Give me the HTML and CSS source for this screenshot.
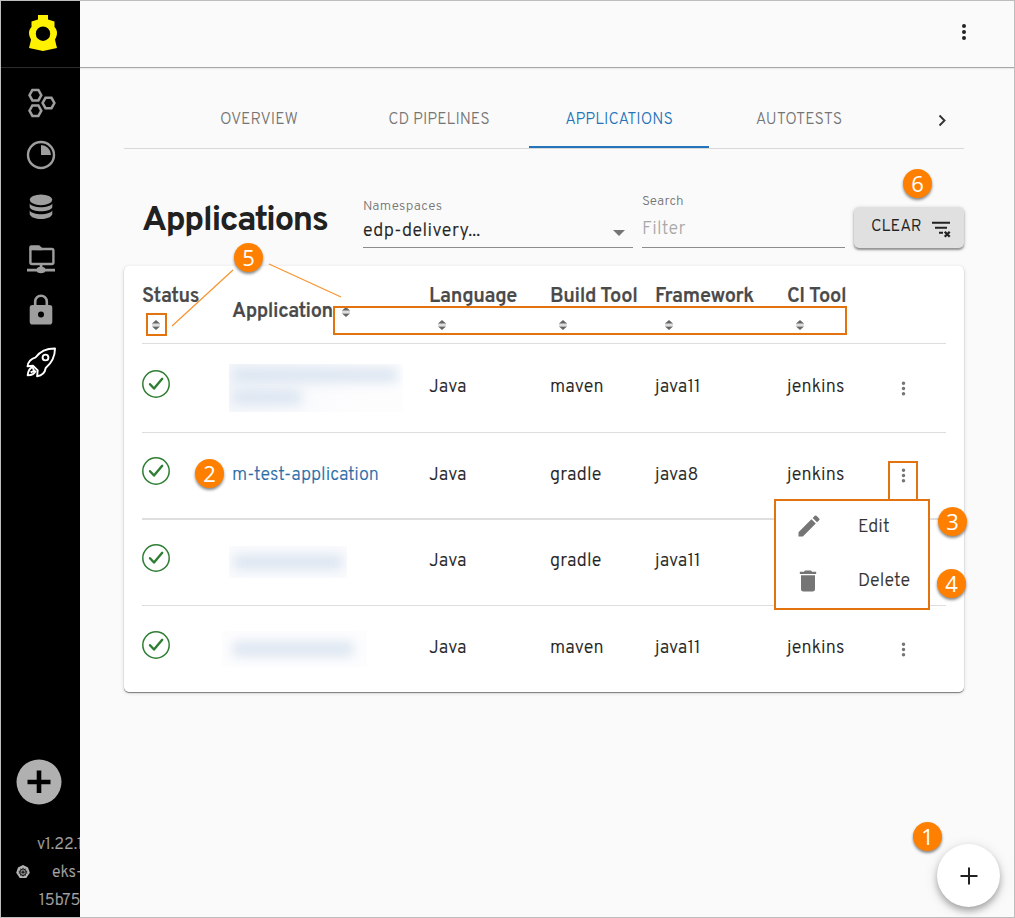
FILE: index.html
```html
<!DOCTYPE html>
<html lang="en">
<head>
<meta charset="utf-8">
<title>Applications</title>
<link rel="stylesheet" href="styles.css">
</head>
<body>
<svg class="defs" width="0" height="0" aria-hidden="true">
  <symbol id="sort" viewBox="0 0 10 12"><path fill="#ddd" d="M1 4h8v3H1z"/><path fill="#666" d="M1 4.500 5 1l4 3.500zM1 7.500 5 11l4-3.500z"/></symbol>
  <symbol id="check" viewBox="0 0 28 28"><circle cx="14" cy="14" r="13.200" fill="none" stroke="#2e7d32" stroke-width="1.500"/><path d="m8 14.200 4 4.300 8.200-9.700" fill="none" stroke="#2e7d32" stroke-width="2.400" stroke-linecap="round" stroke-linejoin="round"/></symbol>
  <symbol id="dots" viewBox="0 0 24 24"><path d="M12 8a2 2 0 1 0 0-4 2 2 0 0 0 0 4zm0 2a2 2 0 1 0 0 4 2 2 0 0 0 0-4zm0 6a2 2 0 1 0 0 4 2 2 0 0 0 0-4z"/></symbol>
</svg>
<div class="frame">
  <aside class="sidebar">
    <div class="brand">
      <svg width="28" height="36" viewBox="0 0 28 36"><path fill="#fff200" fill-rule="evenodd" d="M9 0h10v4.500l6.500 2V12c1.600 1.500 2.500 3.500 2.500 6s-1 4.500-2 6.500l.5 2.500 1.500 6-14 3-14-3 1.500-6 .5-2.500C1 22.500 0 20.500 0 18s.9-4.500 2.500-6V6.500l6.500-2zM14 11.500a7.200 7.200 0 1 0 0 14.400 7.200 7.200 0 0 0 0-14.400z"/></svg>
    </div>
    <nav class="side-nav">
      <svg viewBox="0 0 30 30"><g fill="none" stroke="#9e9e9e" stroke-width="2.500"><path d="m6.400 2h6l2.900 5.200-2.900 5.200h-6L3.500 7.200zM6.400 17.500h6l2.900 5.200-2.900 5.200h-6L3.500 22.700zM19.500 9.800h6l2.900 5.200-2.900 5.200h-6L16.600 15z"/></g></svg>
      <svg viewBox="0 0 30 30"><circle cx="15" cy="15" r="13" fill="none" stroke="#9e9e9e" stroke-width="2.400"/><path d="M15 5a10 10 0 0 1 10 10H15z" fill="#9e9e9e"/></svg>
      <svg viewBox="0 0 30 30"><g fill="#9e9e9e"><ellipse cx="15" cy="7.800" rx="11.300" ry="5.400"/><path d="M3.700 11.500c3 5 19.600 5 22.600 0v3.700c-2 5.300-20.600 5.300-22.600 0zM3.700 18.500c3 5 19.600 5 22.600 0v3.700c-2 6.300-20.600 6.300-22.600 0z"/></g></svg>
      <svg viewBox="0 0 30 30"><rect x="4.400" y="5" width="23" height="15" rx="1.500" fill="none" stroke="#9e9e9e" stroke-width="2.400"/><path fill="#9e9e9e" d="M3.200 6V3.500c0-1.500 1-2.200 2-2.200h8l3 2.700v2.200zM13.800 20h2.600v4h-2.600zM1 24.700h9.700c1-2.500 7.600-2.500 8.600 0H29v2.800h-9.700c-1 2.200-7.600 2.200-8.600 0H1z"/></svg>
      <svg class="lock" viewBox="0 0 30 30"><path fill="none" stroke="#9e9e9e" stroke-width="2.600" d="M9.200 11V5.500a5.800 5.800 0 0 1 11.600 0V11"/><path fill="#9e9e9e" fill-rule="evenodd" d="M6.500 8.900h17a2.800 2.800 0 0 1 2.800 2.800v14a2.800 2.800 0 0 1-2.800 2.800h-17a2.800 2.800 0 0 1-2.800-2.800v-14a2.800 2.800 0 0 1 2.800-2.800zM15 15.500a3 3 0 1 0 0 6 3 3 0 0 0 0-6z"/></svg>
      <svg viewBox="0 0 30 30"><g transform="translate(0 -1)" fill="none" stroke="#fff" stroke-width="1.900" stroke-linejoin="round"><path d="M29 1.500C21 1.400 14 4.500 9.700 10.300c-4.500 1.200-7.500 4-8.200 9l5.700-.5 4.500 4.600-.6 5.900c5-.7 7.900-4 8.600-8.300C25.500 16 29 9 29 1.500z"/><circle cx="19.500" cy="10.500" r="2.900"/><path d="M6.500 20.200c-3 1.300-4.500 4-4.800 8.200 4.300-.2 7-1.800 8.100-4.800M4.600 25.300l3.500-1.500-1.500-3.600"/></g></svg>
    </nav>
    <div class="side-foot">
      <svg class="add" width="46" height="46" viewBox="0 0 46 46"><circle cx="23" cy="23" r="22.500" fill="#b0b0b0"/><path d="M23 11.500v22.500M11.500 23H34.500" stroke="#000" stroke-width="4.600"/></svg>
      <div class="cluster">
        <svg class="helm" width="14" height="14" viewBox="0 0 14 14"><path fill="#b5b5b5" d="m7 .1 5 2.300 1.800 5.400-3.500 5.200H3.700L.2 7.800 2 2.400z"/><g fill="none" stroke="#000" stroke-width=".9"><circle cx="7" cy="7.200" r="3.300"/><path d="M7 2.500v9.400M2.500 6.200l9 2M11.500 6.200l-9 2M4.300 11l5.400-7.600M9.700 11 4.300 3.400" stroke-width=".5"/></g></svg>
        <div class="cluster-text"><span>v1.22.1</span><span class="eks">eks-</span><span class="id">15b75</span></div>
      </div>
    </div>
  </aside>

  <main class="main">
    <header class="topbar"><svg width="24" height="24" fill="#222"><use href="#dots"/></svg></header>
    <section class="content">
      <nav class="tabs">
        <a class="tab t1">OVERVIEW</a><a class="tab">CD PIPELINES</a><a class="tab active">APPLICATIONS</a><a class="tab">AUTOTESTS</a>
        <svg class="chev" width="20" height="20" viewBox="0 0 20 20"><path d="m7.500 5.500 5 5-5 5" fill="none" stroke="#333" stroke-width="1.900"/></svg>
      </nav>

      <div class="toolbar">
        <h1>Applications</h1>
        <div class="field namespaces"><label>Namespaces</label><div class="value"><span>edp-delivery...</span><i class="caret"></i></div></div>
        <div class="field search"><label>Search</label><div class="value hint"><span>Filter</span></div></div>
        <button class="clear"><span>CLEAR</span><svg width="20" height="18" viewBox="0 0 20 18"><path d="M0 1.700h18M3 6.700h12M7 11.700h4" fill="none" stroke="#222" stroke-width="2"/><path d="m12.700 10.700 5 5M17.700 10.700l-5 5" fill="none" stroke="#222" stroke-width="2.300"/></svg></button>
      </div>

      <div class="card">
        <div class="row head">
          <div>Status<svg class="s-wide"><use href="#sort"/></svg></div>
          <div class="h-app">Application<svg><use href="#sort"/></svg></div>
          <div>Language<svg><use href="#sort"/></svg></div>
          <div>Build Tool<svg><use href="#sort"/></svg></div>
          <div>Framework<svg class="s-wide"><use href="#sort"/></svg></div>
          <div>CI Tool<svg><use href="#sort"/></svg></div>
          <div></div>
        </div>
        <div class="row r1">
          <svg class="ok"><use href="#check"/></svg><div class="masked m1"><i></i><i></i></div>
          <span>Java</span><span>maven</span><span>java11</span><span>jenkins</span><svg class="more"><use href="#dots"/></svg>
        </div>
        <div class="row r2">
          <svg class="ok"><use href="#check"/></svg><a class="app">m-test-application</a>
          <span>Java</span><span>gradle</span><span>java8</span><span>jenkins</span><svg class="more"><use href="#dots"/></svg>
        </div>
        <div class="row r3">
          <svg class="ok"><use href="#check"/></svg><div class="masked m3"><i></i></div>
          <span>Java</span><span>gradle</span><span>java11</span>
        </div>
        <div class="row r4">
          <svg class="ok"><use href="#check"/></svg><div class="masked m4"><i></i></div>
          <span>Java</span><span>maven</span><span>java11</span><span>jenkins</span><svg class="more"><use href="#dots"/></svg>
        </div>
      </div>
    </section>
  </main>

  <div class="menu">
    <div class="item"><svg width="28" height="28" viewBox="0 0 24 24" fill="#757575"><path d="M3 17.250V21h3.750L17.810 9.940l-3.750-3.750zM20.710 7.040a1 1 0 0 0 0-1.410l-2.340-2.340a1 1 0 0 0-1.410 0l-1.830 1.830 3.750 3.750z"/></svg><span>Edit</span></div>
    <div class="item"><svg width="28" height="28" viewBox="0 0 24 24" fill="#757575"><path d="M6 19a2 2 0 0 0 2 2h8a2 2 0 0 0 2-2V7H6zM19 4h-3.500l-1-1h-5l-1 1H5v2h14z"/></svg><span>Delete</span></div>
  </div>
  <button class="fab"><svg width="18" height="18" viewBox="0 0 18 18"><path d="M9 .5v17M.5 9h17" stroke="#222" stroke-width="2"/></svg></button>

  <svg class="lines" width="1015" height="918"><path d="M233 270 172 326M269 264l72 33" stroke="#f7942d" stroke-width="1.200" fill="none"/></svg>
  <div class="mark mark-status"></div><div class="mark mark-head"></div><div class="mark mark-more"></div>
  <b class="pin p1">1</b><b class="pin p2">2</b><b class="pin p3">3</b><b class="pin p4">4</b><b class="pin p5">5</b><b class="pin p6">6</b>
</div>
</body>
</html>
```
FILE: styles.css
```css
* { box-sizing: border-box; }
body { margin: 0; font-family: "Overpass", Roboto, "Liberation Sans", sans-serif; font-weight: 400; color: #212121; }
.defs { position: absolute; }
.frame { position: relative; width: 1015px; height: 918px; border: 1px solid #bdbdbd; background: #fafafa; display: flex; overflow: hidden; }

.sidebar { width: 79px; background: #000; display: flex; flex-direction: column; overflow: hidden; flex: none; }
.brand { height: 67px; border-bottom: 1px solid #2b2b2b; padding: 14px 0 0 28px; }
.brand svg, .side-nav svg { display: block; }
.side-nav { display: flex; flex-direction: column; gap: 22px; padding: 20px 0 0 25px; }
.side-nav svg { width: 30px; height: 30px; overflow: visible; }
.side-foot { margin-top: auto; color: #a5a5a5; height: 158px; }
.add { display: block; margin-left: 15px; }
.cluster { display: flex; align-items: center; margin-top: 23px; white-space: nowrap; }
.helm { margin-left: 15px; flex: none; }
.cluster-text { display: flex; flex-direction: column; line-height: 28px; padding: 3px 0 0 7px; width: 50px; flex: none; font-size: 16px; font-weight: 300; -webkit-text-stroke: .2px; }
.cluster-text .eks { margin-left: 15px; }
.cluster-text .id { margin-left: 2px; }

.main { flex: 1; display: flex; flex-direction: column; }
.topbar { height: 67px; border-bottom: 1px solid #a8a8a8; box-shadow: 0 1px 1px #0001; display: flex; justify-content: flex-end; padding: 19px 38px 0 0; flex: none; }
.content { padding: 22px 50px 0 44px; }

.tabs { display: grid; grid-template-columns: 45px repeat(4, 180px) 1fr; height: 59px; border-bottom: 1px solid #d8d8d8; }
.tab { height: 58px; padding-top: 2px; text-align: center; font-size: 16px; line-height: 57px; color: #757575; font-weight: 300; }
.t1 { grid-column: 2; }
.tab.active { color: #2374b8; border-bottom: 2px solid #2374b8; }
.chev { margin: 20px 0 0 43px; }

.toolbar { display: grid; grid-template-columns: 239px 270px 9px 203px 9px 110px; height: 116px; }
h1 { margin: 52px 0 0 18px; font-size: 35px; line-height: 40px; font-weight: 700; letter-spacing: -1.500px; }
.field { border-bottom: 1px solid #8c8c8c; display: flex; flex-direction: column; }
.namespaces { grid-column: 2; height: 99px; padding-top: 49px; }
.search { grid-column: 4; height: 99px; padding-top: 44px; }
label { font-size: 13.500px; line-height: 18px; color: #757575; letter-spacing: .3px; font-weight: 300; }
.search label { letter-spacing: .1px; }
.value { display: flex; justify-content: space-between; font-size: 18px; line-height: 24px; margin-top: 4px; letter-spacing: .4px; font-weight: 300; -webkit-text-stroke: .2px; }
.search .value { margin-top: 7px; }
.hint { color: #a8a8a8; letter-spacing: .2px; -webkit-text-stroke: 0; }
.caret { border: 6px solid transparent; border-top-color: #757575; border-bottom: 0; margin: 10px 8px 0 0; align-self: flex-start; }
.clear { grid-column: 6; margin-top: 58px; height: 41px; border: 0; border-radius: 5px; background: #e0e0e0; box-shadow: 0 2px 2px #0005, 0 1px 4px #0003; display: flex; padding: 10px 0 0 17px; font: 300 16.500px/20px "Overpass", Roboto, sans-serif; letter-spacing: -.1px; color: #222; -webkit-text-stroke: .1px; }
.clear svg { margin: 4px 0 0 11px; }

.card { height: 426px; margin-top: 1px; border-radius: 5px; background: #fff; box-shadow: 0 1px 1px #0007, 0 1px 4px #0002; padding: 0 18px; }
.row { display: grid; grid-template-columns: 90px 197px 121px 105px 132px 105px 1fr; border-bottom: 1px solid #dedede; font-size: 18px; line-height: 24px; letter-spacing: .1px; font-weight: 300; -webkit-text-stroke: .15px; }
.row > * { justify-self: start; }
.head { height: 78px; padding-top: 19px; font-size: 20px; font-weight: 600; color: #4a4a4a; letter-spacing: -.35px; -webkit-text-stroke: .2px; }
.head div { display: flex; flex-direction: column; align-items: flex-start; white-space: nowrap; }
.head svg { width: 10px; height: 12px; margin: 10px 0 0 8px; }
.head .s-wide { margin-left: 9px; }
.head .h-app { flex-direction: row; padding-top: 15px; }
.head .h-app svg { margin: 6px 0 0 8px; }
.r1 { height: 89px; padding-top: 32px; }
.r2 { height: 87px; padding-top: 31px; border-bottom-width: 2px; }
.r3 { height: 86px; padding-top: 30px; }
.r4 { height: 86px; padding-top: 31px; border: 0; }
.ok { width: 28px; height: 28px; margin-top: -6px; }
.r2 .ok { margin-top: -7px; }
.more { width: 21px; height: 21px; fill: #757575; margin: 2px 0 0 1px; }
.r2 .more { margin-top: 1px; }
.app { color: #2b6da8; letter-spacing: 0; }
.masked { margin: -12px 0 0 -3px; background: #fafbfd; height: 48px; width: 174px; overflow: hidden; padding: 4px; display: flex; flex-direction: column; gap: 8px; }
.masked i { display: block; height: 14px; width: 164px; background: #dae4f0; filter: blur(6px); flex: none; }
.m1 i + i { width: 68px; }
.m1 { background: linear-gradient(110deg, #f4f7fb, #fdfdfe 75%); }
.m3 { width: 118px; height: 32px; margin-top: -4px; padding: 9px 5px; }
.m3 i { width: 108px; }
.m4 { width: 145px; height: 36px; margin: -6px 0 0 -10px; padding: 11px; background: #fdfdfe; }
.m4 i { width: 120px; }

.menu { position: absolute; left: 773px; top: 498px; width: 156px; height: 111px; background: #fff; border: 2px solid #e2730f; font-size: 18px; line-height: 24px; letter-spacing: .1px; font-weight: 300; -webkit-text-stroke: .15px; color: #333; }
.item { display: flex; height: 54px; padding: 12px 0 0 19px; }
.item span { margin: 3px 0 0 35px; }
.item svg { margin-top: -1px; stroke: none; }
.item + .item svg { margin: 0 0 0 -1px; }
.item + .item span { margin-left: 36px; }

.fab { position: absolute; left: 936px; top: 843px; width: 63px; height: 63px; border: 0; border-radius: 50%; background: #fff; box-shadow: 0 4px 6px #0004, 0 3px 14px #0002; display: grid; place-items: center; }
.lines { position: absolute; left: -1px; top: -1px; }
.mark { position: absolute; border: 2px solid #e2730f; }
.mark-status { left: 145px; top: 312px; width: 21px; height: 23px; }
.mark-head { left: 332px; top: 305px; width: 514px; height: 29px; }
.mark-more { left: 887px; top: 460px; width: 30px; height: 40px; }
.pin { position: absolute; width: 29px; height: 29px; border-radius: 50%; background: #ff8000; color: #fff; font: 400 22px/28px "Open Sans", sans-serif; text-align: center; box-shadow: 0 2px 3px #0007; }
.p1 { left: 912px; top: 821px; } .p2 { left: 194px; top: 458px; } .p3 { left: 937px; top: 506px; }
.p4 { left: 936px; top: 568px; } .p5 { left: 233px; top: 242px; } .p6 { left: 902px; top: 168px; }
```
